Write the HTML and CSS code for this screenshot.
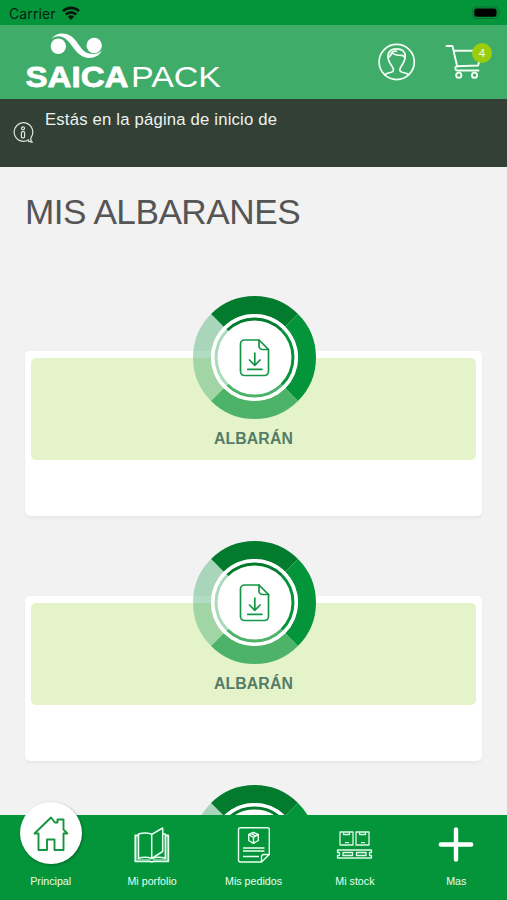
FILE: index.html
```html
<!DOCTYPE html>
<html lang="es">
<head>
<meta charset="utf-8">
<title>Mis albaranes</title>
<link rel="stylesheet" href="styles.css">
</head>
<body>
<svg class="defs" aria-hidden="true">
  <defs>
    <symbol id="dial" viewBox="-61.5 -61.5 123 123">
      <g fill="none">
        <path d="M-37.12 -37.12A52.5 52.5 0 0 1 37.12 -37.12" stroke="#037b2f" stroke-width="18"/>
        <path d="M37.12 -37.12A52.5 52.5 0 0 1 37.12 37.12" stroke="#04953b" stroke-width="18"/>
        <path d="M37.12 37.12A52.5 52.5 0 0 1 -37.12 37.12" stroke="#4db369" stroke-width="18"/>
        <path d="M-37.12 37.12A52.5 52.5 0 0 1 -37.12 -37.12" stroke="#50b278" stroke-opacity=".45" stroke-width="18"/>
      </g>
      <circle r="43.5" fill="#fff"/>
      <g fill="none" stroke-width="3">
        <path d="M-27.2 -27.2A38.5 38.5 0 0 1 27.2 -27.2" stroke="#037b2f"/>
        <path d="M27.2 -27.2A38.5 38.5 0 0 1 27.2 27.2" stroke="#04953b"/>
        <path d="M27.2 27.2A38.5 38.5 0 0 1 -27.2 27.2" stroke="#4db369"/>
        <path d="M-27.2 27.2A38.5 38.5 0 0 1 -27.2 -27.2" stroke="#aadbbb"/>
      </g>
      <g fill="none" stroke="#159647" stroke-width="1.7" stroke-linecap="round" stroke-linejoin="round">
        <path d="M4.5 -17.500H-10a4 4 0 0 0 -4 4V14a4 4 0 0 0 4 4H10a4 4 0 0 0 4 -4V-8z"/>
        <path d="M4.500 -17.500V-11.500a3.500 3.500 0 0 0 3.500 3.500H14"/>
        <path d="M.3 -4.500V7.500M-5 2.500L.3 7.800L5.600 2.500M-6.800 11.800H7.500"/>
      </g>
    </symbol>
  </defs>
</svg>

<div class="status">
  <span class="carrier">Carrier</span>
  <svg class="wifi" width="18" height="14" viewBox="0 0 18 14" fill="none" stroke="#06180c" stroke-width="2.600">
    <path d="M1 5.200a11.300 11.300 0 0 1 16 0"/>
    <path d="M3.800 8.500a7.400 7.400 0 0 1 10.400 0"/>
    <path d="M9 13.900L5.900 10.700a4.500 4.500 0 0 1 6.200 0z" fill="#06180c" stroke="none"/>
  </svg>
  <svg class="battery" width="30" height="14" viewBox="0 0 30 14">
    <rect x=".6" y=".9" width="25.600" height="11.600" rx="3.500" fill="none" stroke="#087331"/>
    <rect x="2.300" y="2.600" width="22.200" height="8.200" rx="2" fill="#000"/>
    <path d="M27.400 4.800q2.200 1.900 0 3.800z" fill="#087331"/>
  </svg>
</div>

<header class="header">
  <svg class="logo" width="200" height="67" viewBox="24 32 200 67">
    <g fill="#fff">
      <circle cx="58.300" cy="46.200" r="7.700"/>
      <circle cx="94.200" cy="45.500" r="7.700"/>
      <path d="M51.500 39C55 33 65 31.500 71.500 36.500C79 42 81 52 89 53.500C94 54.500 99 54 101.800 50.500C99 57 91 59.500 84 57C74.500 53.500 71 41 63.500 37.500C59 35.500 54.500 36 51.500 39z"/>
      <text class="logo-bold" x="25.500" y="87.300" textLength="103" lengthAdjust="spacingAndGlyphs">SAICA</text>
      <text class="logo-light" x="131" y="87.300" textLength="90" lengthAdjust="spacingAndGlyphs">PACK</text>
    </g>
  </svg>
  <svg class="user" width="38" height="38" viewBox="378 43 38 38" fill="none" stroke="#f2fff5" stroke-width="1.700" stroke-linecap="round" stroke-linejoin="round">
    <circle cx="396.700" cy="62" r="17.600"/>
    <path d="M384.800 74.600C387.500 72.300 391.500 73.200 393 71.200C394 69.500 393 67.500 391.500 65.500C389 62 387.800 59.500 388 56C388.300 51.200 391.800 48.800 396.500 48.800C401.500 48.800 405 51.200 405.200 56C405.300 59.500 404 62 401.800 65.500C400.300 67.500 399.300 69.500 400.300 71.200C401.800 73.200 405.800 72.300 408.500 74.600"/>
    <path d="M388.200 57.300C390.300 56.300 391.300 54.800 391.600 52.600C394.500 54.900 398 55.600 402.500 55.400L405 57.500M391.600 52.600C393 51.200 395 50.900 396.500 51.300"/>
  </svg>
  <div class="cart">
    <svg width="40" height="38" viewBox="444 43 40 38" fill="none" stroke="#f2fff5" stroke-width="1.900" stroke-linecap="round" stroke-linejoin="round">
      <path d="M446.500 46H452.500L457.200 66.500M454.200 50.700H481L478.200 65.500L456.500 66.300C454.500 67 455 70.500 457.300 70.500H478.500"/>
      <circle cx="458.800" cy="75.200" r="2.600"/>
      <circle cx="474.500" cy="75.200" r="2.600"/>
    </svg>
    <span class="badge">4</span>
  </div>
</header>

<div class="notice">
  <svg width="22" height="22" viewBox="12 122 22 22" fill="none" stroke="#dce5de" stroke-width="1.200" stroke-linecap="round" stroke-linejoin="round">
    <path d="M28.600 139.800A9.300 9.300 0 1 1 31.200 137.200L30.600 139.500L32.300 142.200L28.600 141.300z"/>
    <circle cx="23" cy="128.300" r="1.500"/>
    <rect x="21.400" y="131.600" width="3.200" height="6.200" rx="1"/>
  </svg>
  <p>Estás en la página de inicio de</p>
</div>

<main class="content">
  <h1>MIS ALBARANES</h1>
  <section class="card">
    <div class="panel"><svg class="dial"><use href="#dial"/></svg><h2>ALBARÁN</h2></div>
  </section>
  <section class="card">
    <div class="panel"><svg class="dial"><use href="#dial"/></svg><h2>ALBARÁN</h2></div>
  </section>
  <section class="card">
    <div class="panel"><svg class="dial"><use href="#dial"/></svg></div>
  </section>
</main>

<nav class="tabs">
  <a class="tab">
    <span class="tab-icon active">
      <svg width="36" height="36" viewBox="33 814 36 36" fill="none" stroke="#15953f" stroke-width="1.900" stroke-linejoin="round">
        <path d="M38.500 832.500V849H47V838.500H54.500V849H63.500V832.500H67.300L63.500 828.500V818.500H57.500V821.500H54.800L51 816.500L34.500 832.500z"/>
      </svg>
    </span>
    <span>Principal</span>
  </a>
  <a class="tab">
    <span class="tab-icon">
      <svg width="38" height="38" viewBox="134 826 38 38" fill="none" stroke="#e8fff0" stroke-width="1.500" stroke-linejoin="round">
        <path d="M152.700 858.500C148.500 856.800 143.500 857 139.500 858.300V834C144 832.500 148.500 832.500 152.700 834.300z"/>
        <path d="M152.700 834.300L163.700 828V851.500L152.700 858.500"/>
        <path d="M163.700 834H166.300V858.300C162 857 157 856.800 152.700 858.500"/>
        <path d="M139.500 835.500H136.300V861.300H150.500Q152.700 862.500 155 861.300H169.300V835.500H166.300" stroke-width="1.800"/>
        <path d="M137.900 836V859.700H151.500M154 859.700H167.800V836" stroke-width="1" stroke-opacity=".6"/>
      </svg>
    </span>
    <span>Mi porfolio</span>
  </a>
  <a class="tab">
    <span class="tab-icon">
      <svg width="38" height="38" viewBox="235 826 38 38" fill="none" stroke="#e8fff0" stroke-width="1.400" stroke-linejoin="round">
        <path d="M261.500 862H240.500Q238.500 862 238.500 860V829.500Q238.500 827.700 240.500 827.700H267.500Q269.300 827.700 269.300 829.500V854.500L261.500 862V857Q261.500 854.500 264 854.500H269.300"/>
        <path d="M253.500 832.500L258.300 834.500V840.500L253.500 843.300L248.700 840.500V834.500zM248.700 834.500L253.500 837.500L258.300 834.500M253.500 837.500V843M251 833.500L256 836.300"/>
        <path d="M243 848H264.500M243 851H264.500M243 856.500H259"/>
      </svg>
    </span>
    <span>Mis pedidos</span>
  </a>
  <a class="tab">
    <span class="tab-icon">
      <svg width="38" height="38" viewBox="336 826 38 38" fill="none" stroke="#dff8e7" stroke-width="1.300" stroke-linejoin="round">
        <rect x="340" y="832" width="13" height="13"/>
        <rect x="356" y="832" width="13" height="13"/>
        <path d="M343.500 832V834.500H349.500V832M359.500 832V834.500H365.500V832M345 842.700H349M361 842.700H365"/>
        <path d="M337.500 850H371.500V852.500H369.500V855.500H371.500V858H337.500V855.500H339.500V852.500H337.500z"/>
        <rect x="343" y="852.500" width="9.500" height="3"/>
        <rect x="356.500" y="852.500" width="9.500" height="3"/>
      </svg>
    </span>
    <span>Mi stock</span>
  </a>
  <a class="tab">
    <span class="tab-icon">
      <svg width="38" height="38" viewBox="0 0 38 38" fill="none" stroke="#fff" stroke-width="4.400" stroke-linecap="round">
        <path d="M19 3.500V33.500M3.800 18.500H34.200"/>
      </svg>
    </span>
    <span>Mas</span>
  </a>
</nav>
</body>
</html>
```
FILE: styles.css
```css
* { box-sizing: border-box; }

body {
  margin: 0;
  height: 900px;
  display: flex;
  flex-direction: column;
  overflow: hidden;
  background: #f2f2f2;
  font-family: "Liberation Sans", Arial, sans-serif;
}

svg { display: block; flex: none; }
.defs { width: 0; height: 0; position: absolute; }

.status {
  height: 25px;
  flex: none;
  display: flex;
  align-items: center;
  padding: 2px 5px 0 9px;
  background: #04953b;
  color: #06200f;
}
.carrier { font: 14px/20px Inter, sans-serif; letter-spacing: .1px; width: 53px; white-space: nowrap; }
.wifi { margin-top: -2px; }
.battery { margin-left: auto; margin-top: -2px; }

.header {
  height: 74px;
  flex: none;
  display: flex;
  align-items: flex-start;
  padding: 7px 13px 0 24px;
  background: #40ac69;
}
.logo-bold { font: bold 29px "Liberation Sans", sans-serif; stroke: #fff; stroke-width: .8px; stroke-linejoin: round; }
.logo-light { font: 29.5px "Liberation Sans", sans-serif; }
.user { margin: 11px 28px 0 auto; }
.cart { position: relative; width: 50px; margin-top: 11px; }
.badge {
  position: absolute;
  left: 28px;
  top: 0;
  width: 20px;
  height: 20px;
  border-radius: 50%;
  background: #9bcd0c;
  color: #f6ffe0;
  font-size: 11.5px;
  line-height: 20px;
  text-align: center;
}

.notice {
  height: 68px;
  flex: none;
  display: flex;
  align-items: flex-start;
  gap: 11px;
  padding: 11px 12px;
  background: #334036;
  color: #eef2ee;
}
.notice svg { margin-top: 12px; }
.notice p { margin: 0; font-size: 16.7px; line-height: 20px; letter-spacing: .19px; }

.content {
  flex: 1;
  min-height: 0;
  overflow: hidden;
  padding: 25px 25px 0;
}
h1 {
  margin: 0 0 119px;
  height: 40px;
  font-size: 35.2px;
  line-height: 40px;
  font-weight: 400;
  letter-spacing: -.5px;
  color: #555;
  white-space: nowrap;
}
.card {
  height: 165px;
  margin-bottom: 79.5px;
  padding: 7px 6px;
  border-radius: 5px;
  background: #fff;
  box-shadow: 0 2px 3px rgba(40, 60, 80, .06);
}
.panel {
  height: 102px;
  display: flex;
  flex-direction: column;
  align-items: center;
  border-radius: 5px;
  background: #e5f3cb;
}
.dial { width: 123px; height: 123px; margin: -62px 0 0 1px; }
h2 {
  margin: 10px 0 0;
  font-size: 15.8px;
  line-height: 20px;
  letter-spacing: .1px;
  color: #547c66;
}

.tabs {
  height: 85px;
  flex: none;
  display: flex;
  background: #04953b;
  color: #e8fff0;
}
.tab {
  flex: 1;
  display: flex;
  flex-direction: column;
  align-items: center;
  font-size: 10.7px;
  line-height: 14px;
  white-space: nowrap;
}
.tab-icon {
  height: 38px;
  margin: 11px 0 9.500px;
  display: flex;
  align-items: center;
  justify-content: center;
}
.active {
  width: 62px;
  height: 62px;
  margin: -13px 0 9.500px 1px;
  border-radius: 50%;
  background: #fff;
  box-shadow: 1px 1px 3px rgba(0, 0, 0, .3);
}
```
